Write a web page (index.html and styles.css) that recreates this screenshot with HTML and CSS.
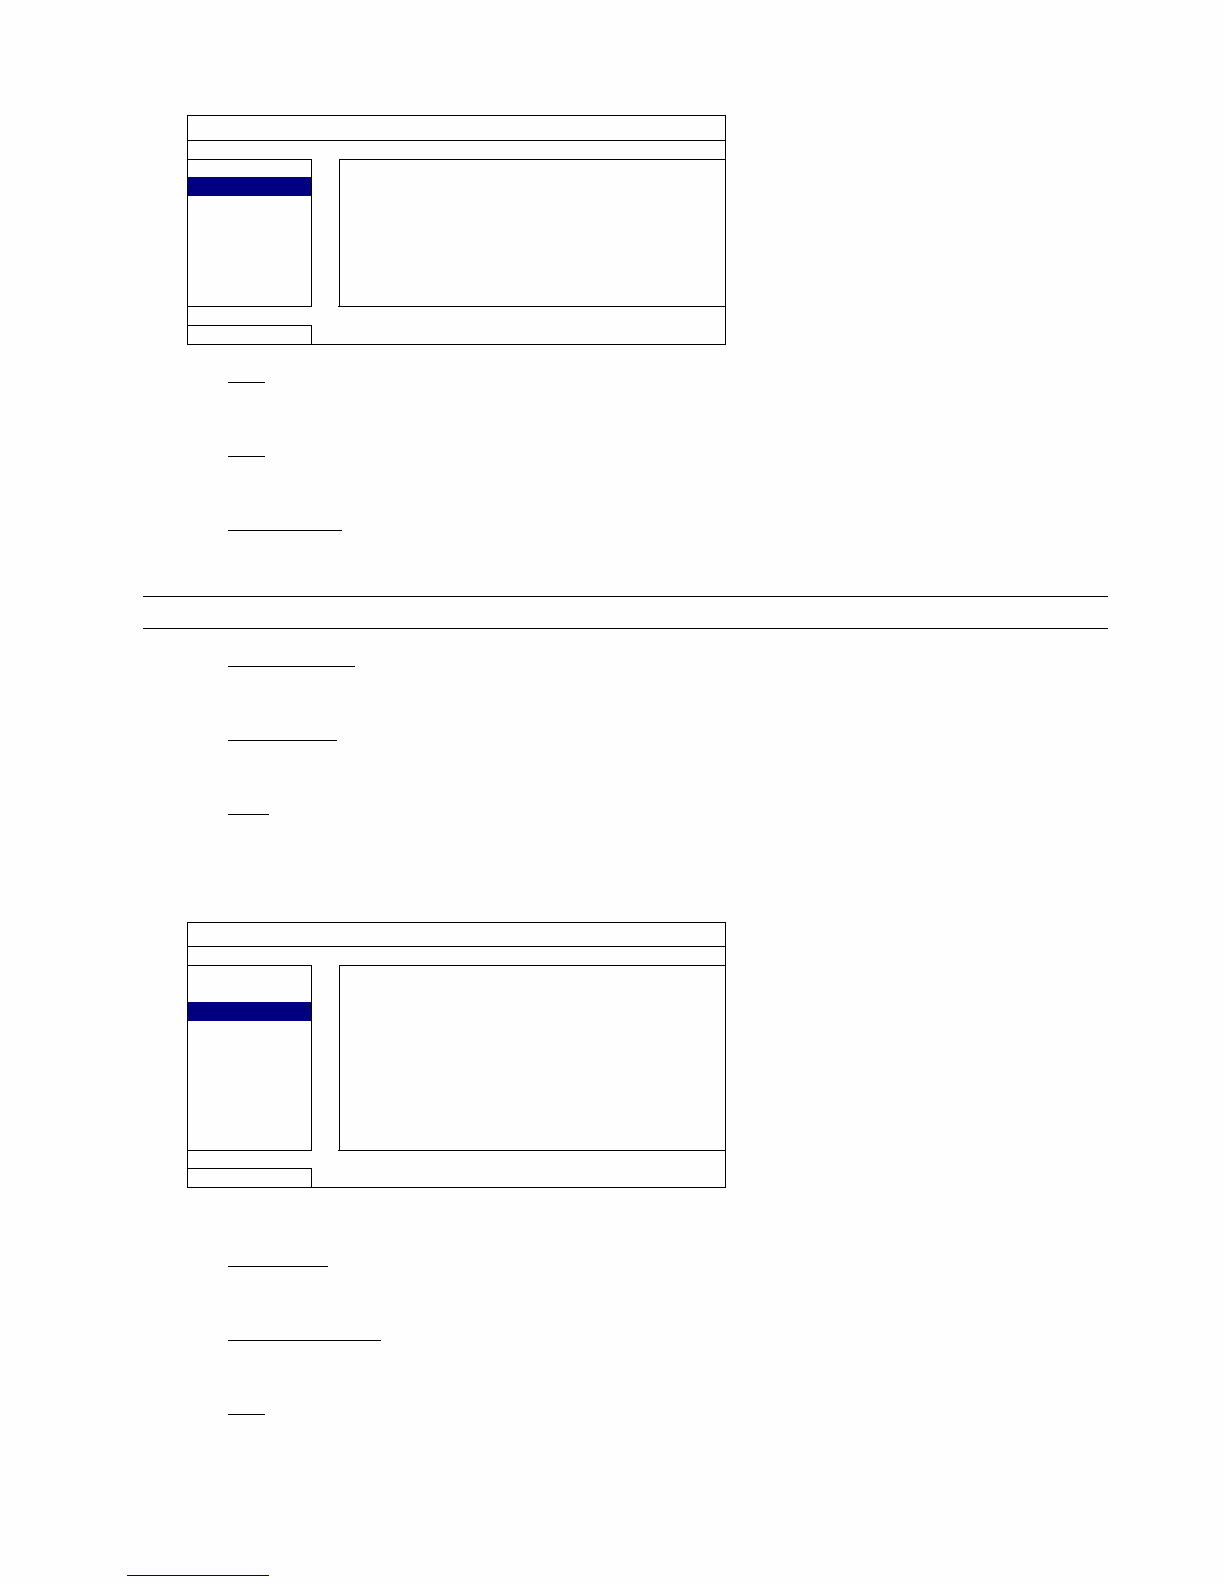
FILE: index.html
```html
<!DOCTYPE html>
<html lang="en">
<head>
<meta charset="utf-8">
<meta name="viewport" content="width=device-width, initial-scale=1">
<title>Manual page</title>
<link rel="stylesheet" href="styles.css">
</head>
<body>
<main class="page">
  <section class="screen screen-short">
    <div class="screen-title"></div>
    <div class="screen-path"></div>
    <div class="screen-body">
      <div class="menu"><div class="menu-selected"></div></div>
      <div class="detail"><div class="detail-pane"></div></div>
    </div>
    <div class="screen-footer"><div class="status"></div></div>
  </section>

  <div class="terms">
    <hr class="term term-xs">
    <hr class="term term-xs">
    <hr class="term term-md">
  </div>

  <div class="note"></div>

  <div class="terms">
    <hr class="term term-lg">
    <hr class="term term-base">
    <hr class="term term-sm">
  </div>

  <section class="screen screen-tall">
    <div class="screen-title"></div>
    <div class="screen-path"></div>
    <div class="screen-body">
      <div class="menu"><div class="menu-selected"></div></div>
      <div class="detail"><div class="detail-pane"></div></div>
    </div>
    <div class="screen-footer"><div class="status"></div></div>
  </section>

  <div class="terms terms-spaced">
    <hr class="term term-half">
    <hr class="term term-xl">
    <hr class="term term-xs">
  </div>
</main>
<footer class="page-footer"><hr class="link-line"></footer>
</body>
</html>
```

FILE: styles.css
```css
* {
  box-sizing: border-box;
}

body {
  margin: 0;
  background: #fefefe;
  color: #000;
  font-family: "Liberation Sans", Arial, sans-serif;
}

.page {
  display: flex;
  flex-direction: column;
  padding: 115px 116px 160px 143px;
}

/* Device menu screens */
.screen {
  display: flex;
  flex-direction: column;
  width: calc(100% - 44px);
  max-width: 539px;
  margin-left: 44px;
  border: 1px solid #000;
}

.screen-short {
  --title-height: 25px;
  --body-height: 148px;
  --menu-offset: 17px;
  --footer-gap: 18px;
}

.screen-tall {
  --title-height: 24px;
  --body-height: 186px;
  --menu-offset: 36px;
  --footer-gap: 17px;
  margin-top: 107px;
}

.screen-title {
  min-height: var(--title-height);
  border-bottom: 1px solid #000;
}

.screen-path {
  min-height: 18px;
}

.screen-body {
  display: grid;
  grid-template-columns: 124px 1fr;
  column-gap: 26px;
  min-height: var(--body-height);
}

.menu {
  padding-top: var(--menu-offset);
  border: 1px solid #000;
  border-left: 0;
}

.menu-selected {
  height: 19px;
  background: #000080;
}

.detail {
  display: flex;
  padding-left: 1px;
  border-bottom: 1px solid #000;
}

.detail-pane {
  flex: 1;
  border-top: 1px solid #000;
  border-left: 1px solid #000;
}

.screen-footer {
  padding-top: var(--footer-gap);
}

.status {
  width: 124px;
  height: 19px;
  border-top: 1px solid #000;
  border-right: 1px solid #000;
}

/* Underlined terms */
.terms {
  display: flex;
  flex-direction: column;
  gap: 73px;
  margin-top: 37px;
  padding-left: 85px;
}

.terms-spaced {
  margin-top: 78px;
}

.term,
.link-line {
  height: 1px;
  margin: 0;
  border: 0;
  background: #000;
}

.term-xs { width: 37px; }
.term-sm { width: 41px; }
.term-half { width: 100px; }
.term-base { width: 109px; }
.term-md { width: 114px; }
.term-lg { width: 127px; }
.term-xl { width: 153px; }

.note {
  min-height: 33px;
  margin-top: 65px;
  border-top: 1px solid #000;
  border-bottom: 1px solid #000;
}

.page-footer {
  padding: 0 127px 8px;
}

.link-line {
  width: 142px;
  background: #000080;
}
```
